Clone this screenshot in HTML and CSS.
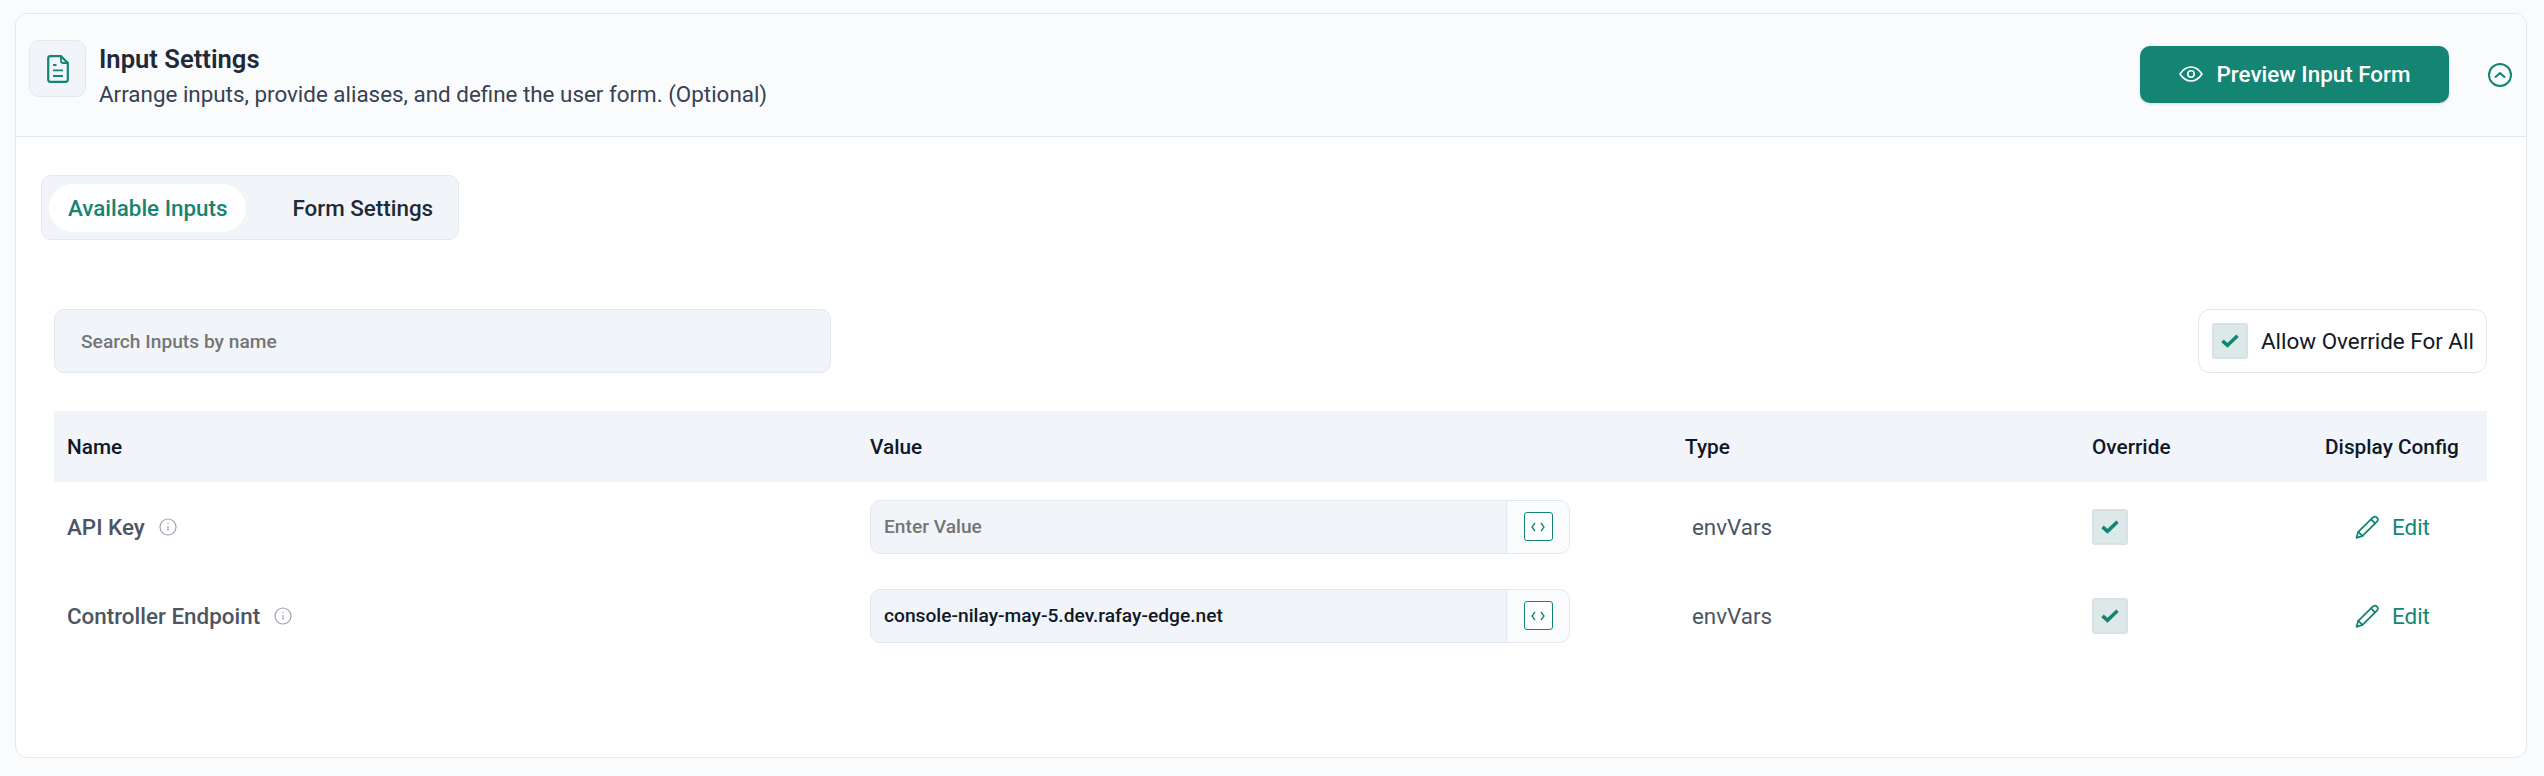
FILE: index.html
```html
<!DOCTYPE html>
<html lang="en">
<head>
<meta charset="utf-8">
<title>Input Settings</title>
<link rel="stylesheet" href="styles.css">
</head>
<body>
<section class="card">
  <header class="card-head">
    <div class="head-left">
      <div class="head-icon">
        <svg width="22" height="28" viewBox="0 0 22 28" fill="none" stroke="#148573" stroke-width="2.200" stroke-linejoin="round" stroke-linecap="round"><path d="M3.500 1.200h10.500l6.800 6.800v16.500a2.300 2.300 0 0 1-2.300 2.300H3.500a2.300 2.300 0 0 1-2.300-2.300V3.500a2.300 2.300 0 0 1 2.300-2.300z"/><path d="M14 1.200v4.500a2.300 2.300 0 0 0 2.300 2.300h4.500" stroke-width="1.800"/><path d="M6 10h3.500M6 15.300h10M6 21h10" stroke-width="1.800" stroke-linecap="butt"/></svg>
      </div>
      <div class="head-text">
        <h1 class="title">Input Settings</h1>
        <p class="subtitle">Arrange inputs, provide aliases, and define the user form. (Optional)</p>
      </div>
    </div>
    <div class="head-right">
      <button class="preview-btn">
        <svg width="24" height="16" viewBox="0 0 24 16" fill="none" stroke="#fff" stroke-width="1.600"><path d="M1 8c3-4.600 6.700-7 11-7s8 2.400 11 7c-3 4.600-6.700 7-11 7S4 12.600 1 8z"/><circle cx="12" cy="8" r="3.200"/></svg>
        <span>Preview Input Form</span>
      </button>
      <svg class="collapse" width="24" height="24" viewBox="0 0 24 24" fill="none" stroke="#148573" stroke-width="2" stroke-linecap="round" stroke-linejoin="round"><circle cx="12" cy="12" r="11"/><path d="M7.500 14l4.500-4 4.500 4"/></svg>
    </div>
  </header>
  <div class="card-body">
    <div class="tabs">
      <div class="tab active">Available Inputs</div>
      <div class="tab">Form Settings</div>
    </div>
    <div class="toolbar">
      <div class="search">Search Inputs by name</div>
      <label class="allow">
        <span class="check"><svg width="18" height="14" viewBox="0 0 18 14" fill="none" stroke="#148573" stroke-width="3.600"><path d="M1.500 6.800l5 4.500 10-9.500"/></svg></span>
        <span>Allow Override For All</span>
      </label>
    </div>
    <div class="grid grid-head">
      <div>Name</div><div>Value</div><div>Type</div><div>Override</div><div class="cfg-head">Display Config</div>
    </div>
    <div class="grid row">
      <div class="name">API Key
        <svg class="info" width="18" height="18" viewBox="0 0 18 18" fill="none" stroke="#9ca3af" stroke-width="1.200"><circle cx="9" cy="9" r="8"/><path d="M9 8v5M9 5v1"/></svg>
      </div>
      <div class="field">
        <div class="field-input placeholder">Enter Value</div>
        <div class="field-addon"><span class="code-btn"><svg width="14" height="10" viewBox="0 0 14 10" fill="none" stroke="#148573" stroke-width="1.300"><path d="M4 1L1 5l3 4M10 1l3 4-3 4"/></svg></span></div>
      </div>
      <div class="type">envVars</div>
      <div class="check-cell"><span class="check"><svg width="18" height="14" viewBox="0 0 18 14" fill="none" stroke="#148573" stroke-width="3.600"><path d="M1.500 6.800l5 4.500 10-9.500"/></svg></span></div>
      <div class="edit">
        <svg width="24" height="24" viewBox="0 0 24 24" fill="none" stroke="#148573" stroke-width="1.800" stroke-linejoin="round" stroke-linecap="round"><path d="M18.200 2.200a2.900 2.900 0 0 1 4 4.100L7.500 20.800 1.500 22.800l1.800-6z"/><path d="M16 4.400l4 4M3.300 16.800l4.200 4"/></svg>
        <span>Edit</span>
      </div>
    </div>
    <div class="grid row">
      <div class="name">Controller Endpoint
        <svg class="info" width="18" height="18" viewBox="0 0 18 18" fill="none" stroke="#9ca3af" stroke-width="1.200"><circle cx="9" cy="9" r="8"/><path d="M9 8v5M9 5v1"/></svg>
      </div>
      <div class="field">
        <div class="field-input filled">console-nilay-may-5.dev.rafay-edge.net</div>
        <div class="field-addon"><span class="code-btn"><svg width="14" height="10" viewBox="0 0 14 10" fill="none" stroke="#148573" stroke-width="1.300"><path d="M4 1L1 5l3 4M10 1l3 4-3 4"/></svg></span></div>
      </div>
      <div class="type">envVars</div>
      <div class="check-cell"><span class="check"><svg width="18" height="14" viewBox="0 0 18 14" fill="none" stroke="#148573" stroke-width="3.600"><path d="M1.500 6.800l5 4.500 10-9.500"/></svg></span></div>
      <div class="edit">
        <svg width="24" height="24" viewBox="0 0 24 24" fill="none" stroke="#148573" stroke-width="1.800" stroke-linejoin="round" stroke-linecap="round"><path d="M18.200 2.200a2.900 2.900 0 0 1 4 4.100L7.500 20.800 1.500 22.800l1.800-6z"/><path d="M16 4.400l4 4M3.300 16.800l4.200 4"/></svg>
        <span>Edit</span>
      </div>
    </div>
  </div>
</section>
</body>
</html>
```
FILE: styles.css
```css
* { box-sizing: border-box; }
html, body { height: 100%; }
body {
  margin: 0;
  padding: 13px 17px 18px 15px;
  background: #fafbfd;
  font-family: Roboto, "Liberation Sans", sans-serif;
  color: #111827;
  overflow: hidden;
}
.card {
  height: 745px;
  border: 1px solid #e2e8f0;
  border-radius: 12px;
  background: #fff;
  overflow: hidden;
}
.card-head {
  height: 123px;
  display: flex;
  align-items: flex-start;
  justify-content: space-between;
  background: #fafbfd;
  border-bottom: 1px solid #e2e8f0;
  padding: 26px 14px 0 13px;
}
.head-left { display: flex; align-items: flex-start; gap: 13px; }
.head-icon {
  width: 57px;
  height: 57px;
  display: flex;
  align-items: center;
  justify-content: center;
  background: #f1f5f9;
  border: 1px solid #e2e8f0;
  border-radius: 10px;
}
.head-text { margin-top: 3px; }
.title { margin: 0; font-size: 25.600px; line-height: 32px; font-weight: 600; color: #1f2937; }
.subtitle { margin: 3px 0 0; font-size: 22.400px; line-height: 32px; font-weight: 400; color: #374151; }
.head-right { display: flex; align-items: center; gap: 39px; margin-top: 6px; }
.preview-btn {
  width: 309px;
  height: 57px;
  display: flex;
  align-items: center;
  justify-content: center;
  gap: 14px;
  padding: 0 0 2px;
  border: 0;
  border-radius: 10px;
  background: #148573;
  box-shadow: 0 1px 3px rgba(0,0,0,.15);
  color: #fff;
  font-family: inherit;
  font-size: 22.400px;
  font-weight: 500;
}
.card-body { padding: 38px 39px 0 38px; }
.tabs {
  width: 418px;
  height: 65px;
  margin-left: -13px;
  display: flex;
  align-items: center;
  gap: 27px;
  padding: 0 7px;
  background: #f1f5f9;
  border: 1px solid #e2e8f0;
  border-radius: 10px;
}
.tab {
  height: 48px;
  padding: 0 19px;
  display: flex;
  align-items: center;
  font-size: 22.400px;
  font-weight: 500;
  color: #1f2937;
  white-space: nowrap;
}
.tab.active { background: #fff; border-radius: 24px; color: #148573; }
.toolbar {
  margin-top: 69px;
  display: flex;
  justify-content: space-between;
  align-items: center;
}
.search {
  width: 777px;
  height: 64px;
  display: flex;
  align-items: center;
  padding-left: 26px;
  background: #f1f5f9;
  border: 1px solid #e2e8f0;
  border-radius: 10px;
  font-size: 19.200px;
  font-weight: 500;
  color: #757575;
}
.allow {
  width: 289px;
  height: 64px;
  display: flex;
  align-items: center;
  gap: 13px;
  padding-left: 13px;
  border: 1px solid #e2e8f0;
  border-radius: 12px;
  font-size: 22.400px;
  color: #111827;
  white-space: nowrap;
}
.check {
  width: 36px;
  height: 36px;
  display: inline-flex;
  align-items: center;
  justify-content: center;
  background: #dde8e9;
  border: 2px solid #d9e1e6;
  border-radius: 3px;
}
.check-cell { display: flex; align-items: center; }
.grid {
  display: grid;
  grid-template-columns: 803px 815px 407px 233px 1fr;
  align-items: center;
}
.grid-head {
  margin-top: 38px;
  height: 71px;
  padding-left: 13px;
  background: #f1f5f9;
  font-size: 20.800px;
  font-weight: 500;
  color: #111827;
}
.cfg-head { white-space: nowrap; }
.row { height: 89px; padding-left: 13px; }
.name {
  display: flex;
  align-items: center;
  gap: 14px;
  font-size: 22.400px;
  font-weight: 500;
  color: #4b5563;
}
.field {
  width: 700px;
  height: 54px;
  display: flex;
  background: #f1f5f9;
  border: 1px solid #e2e8f0;
  border-radius: 10px;
  overflow: hidden;
}
.field-input {
  flex: 1;
  display: flex;
  align-items: center;
  padding-left: 13px;
  font-size: 19.200px;
  font-weight: 500;
}
.placeholder { color: #757575; }
.filled { color: #111827; }
.field-addon {
  width: 63px;
  display: flex;
  align-items: center;
  justify-content: center;
  background: #fafbfd;
  border-left: 1px solid #e2e8f0;
}
.code-btn {
  width: 29px;
  height: 29px;
  display: flex;
  align-items: center;
  justify-content: center;
  border: 1.500px solid #148573;
  border-radius: 3px;
  background: #fff;
}
.type { padding-left: 7px; font-size: 22.400px; color: #4b5563; }
.edit {
  display: flex;
  align-items: center;
  gap: 13px;
  padding-left: 30px;
  font-size: 22.400px;
  color: #148573;
}
```
